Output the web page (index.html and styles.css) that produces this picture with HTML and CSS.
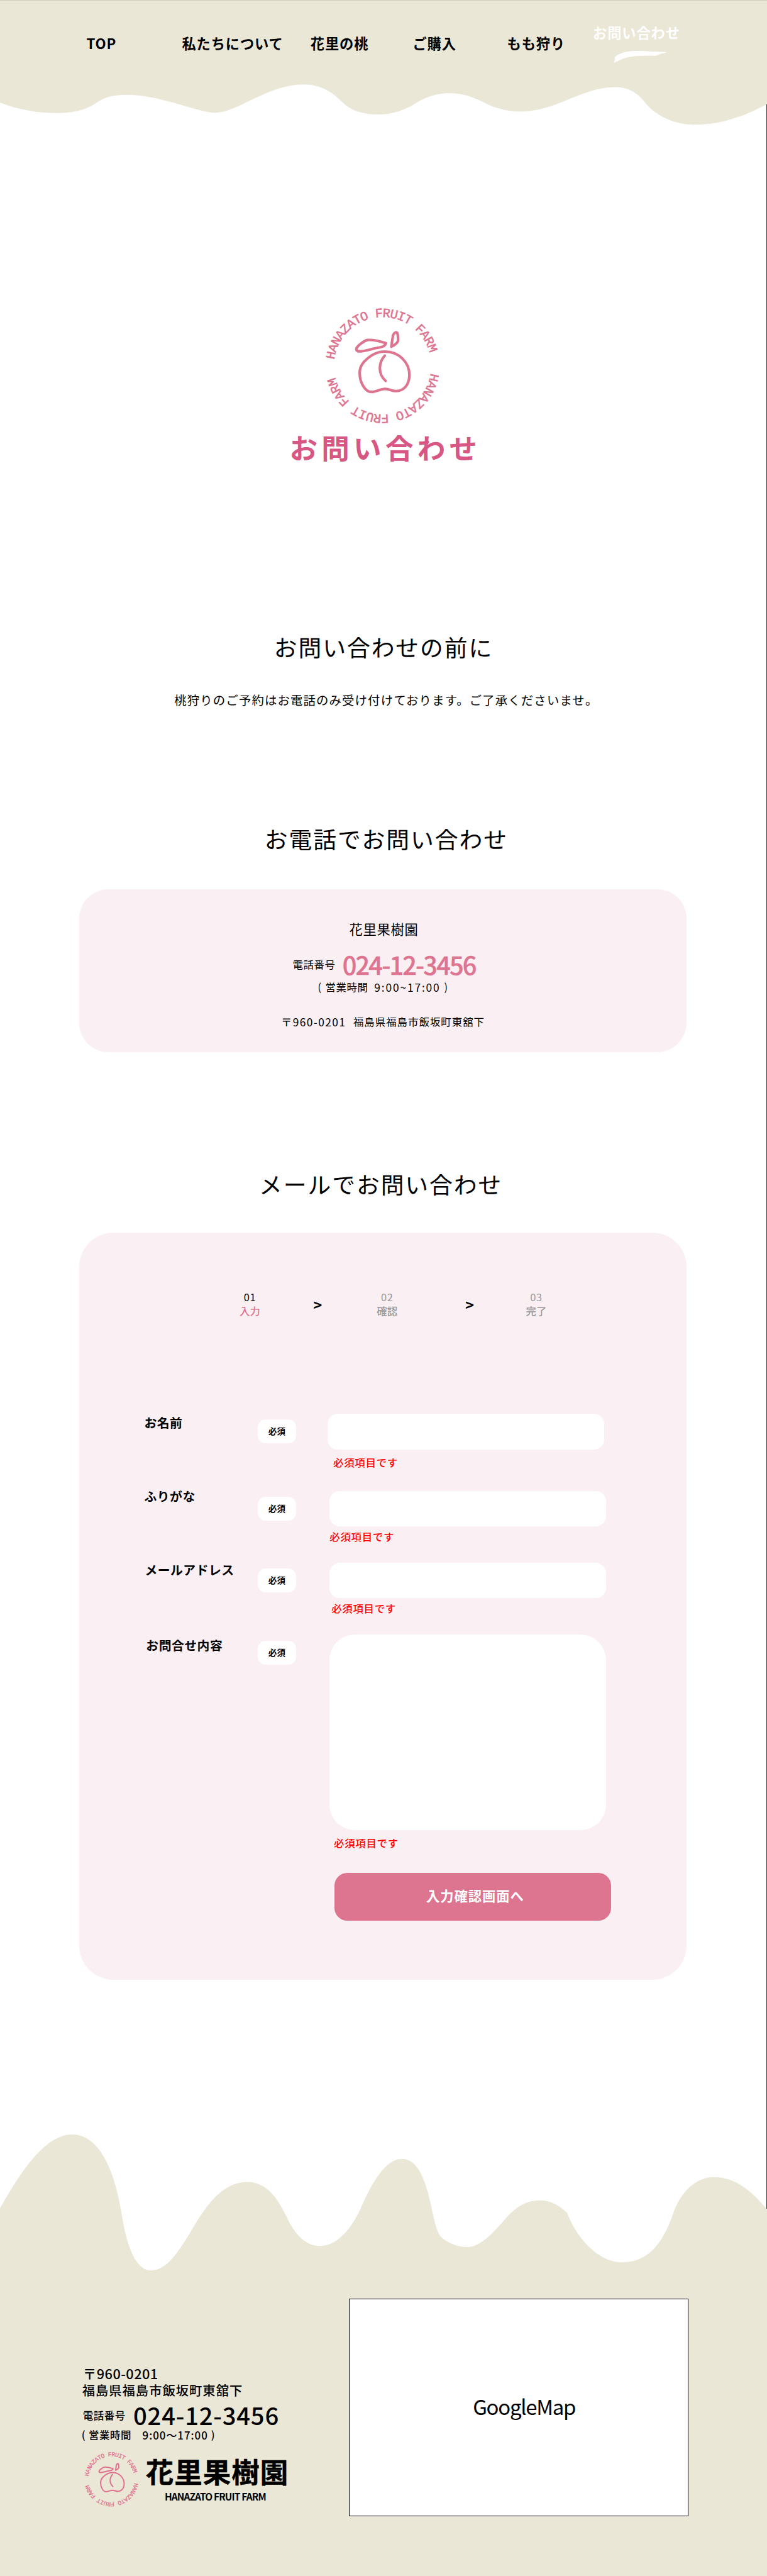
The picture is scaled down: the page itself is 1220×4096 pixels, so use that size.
FILE: index.html
```html
<!DOCTYPE html>
<html lang="ja">
<head>
<meta charset="utf-8">
<title>お問い合わせ | 花里果樹園</title>
<link rel="stylesheet" href="styles.css">
</head>
<body>
<svg class="defs" aria-hidden="true">
  <defs>
    <path id="ring" d="M505 601A240 240 0 0 1 505 121A240 240 0 0 1 505 601"/>
    <symbol id="peach" viewBox="215 71 580 580">
      <g fill="none" stroke="currentColor" stroke-width="13" stroke-linecap="round" stroke-linejoin="round">
        <path d="M515 291C585 290 638 345 637 408C636 460 605 486 570 486C545 486 540 475 518 475C495 475 470 490 450 490C420 490 392 445 392 398C391 370 402 355 412 343C438 315 475 291 515 291Z"/>
        <path d="M430 234C460 232 495 241 522 250C516 265 505 269 490 271C450 276 420 292 385 290C365 283 380 265 398 252C410 243 422 236 430 234Z"/>
        <path d="M548 267L556 212C562 196 576 190 579 205C581 220 583 236 580 242C572 254 560 262 548 267Z"/>
        <path d="M516 311C485 345 480 400 520 436"/>
      </g>
      <g class="ring-text">
        <text transform="rotate(-4.3 505 361)"><textPath href="#ring" startOffset="50%">HANAZATO FRUIT FARM</textPath></text>
        <text transform="rotate(177.2 505 361)"><textPath href="#ring" startOffset="50%">HANAZATO FRUIT FARM</textPath></text>
      </g>
    </symbol>
  </defs>
</svg>

<div class="page">
  <header class="header">
    <svg class="header-wave" viewBox="0 0 1260 204" preserveAspectRatio="none">
      <path d="M0 0V167.7C30 179 60 184.7 92.4 184.7C125 184.7 145 177 158 168C172 158 188 154.7 207 154.7C265 154.7 325 184 354 184C390 184 440 137.7 498 137.7C533 137.7 550 155 562.5 166.7C575 180 597 187 621 187C646 187 660 180 675 173.5C692 162 711 152 738.5 152C765 152 782 161 795.5 167.5C812 176 831 182 855 182C915 182 955 142 1011 142C1038 142 1052 158 1059 166.7C1078 190 1108 203.7 1143 203.7C1190 203.7 1230 186 1260 170V0Z"/>
    </svg>
    <nav class="nav">
      <a>TOP</a>
      <a>私たちについて</a>
      <a>花里の桃</a>
      <a>ご購入</a>
      <a>もも狩り</a>
      <a class="current">お問い合わせ
        <svg class="swoosh" viewBox="0 0 86 20"><path d="M0 19L3 13.500C1 13 1 11 4 8.500C14 1 26 0 40 0C55 0 70 2 86 1.500C86 3 84 4 80 4C76 5 72 8 68 8C50 7 30 8.500 19 11.500C12 13.500 6 18 0 19Z"/></svg>
      </a>
    </nav>
  </header>

  <main class="main">
    <svg class="logo"><use href="#peach"/></svg>
    <h1 class="title">お問い合わせ</h1>

    <h2 class="heading">お問い合わせの前に</h2>
    <p class="lead">桃狩りのご予約はお電話のみ受け付けております。ご了承くださいませ。</p>

    <h2 class="heading heading-phone">お電話でお問い合わせ</h2>
    <section class="card phone-card">
      <div class="farm">花里果樹園</div>
      <div class="tel"><span class="tel-label">電話番号</span><span class="tel-number">024-12-3456</span></div>
      <div class="hours"><span>(</span><span>営業時間</span><span class="time">9:00~17:00</span><span>)</span></div>
      <div class="address"><span class="card-zip">〒960-0201</span><span>福島県福島市飯坂町東舘下</span></div>
    </section>

    <h2 class="heading heading-mail">メールでお問い合わせ</h2>
    <section class="card mail-card">
      <div class="steps">
        <div class="step active"><span class="num">01</span><span class="name">入力</span></div>
        <div class="arrow">&gt;</div>
        <div class="step second"><span class="num">02</span><span class="name">確認</span></div>
        <div class="arrow last">&gt;</div>
        <div class="step third"><span class="num">03</span><span class="name">完了</span></div>
      </div>
      <form class="form">
        <div class="row row-name">
          <span class="label">お名前</span><span class="badge">必須</span>
          <div class="field"><div class="input"></div><p class="error">必須項目です</p></div>
        </div>
        <div class="row row-kana">
          <span class="label">ふりがな</span><span class="badge">必須</span>
          <div class="field"><div class="input"></div><p class="error">必須項目です</p></div>
        </div>
        <div class="row row-mail">
          <span class="label">メールアドレス</span><span class="badge">必須</span>
          <div class="field"><div class="input"></div><p class="error">必須項目です</p></div>
        </div>
        <div class="row row-body">
          <span class="label">お問合せ内容</span><span class="badge">必須</span>
          <div class="field"><div class="input area"></div><p class="error">必須項目です</p></div>
        </div>
        <div class="submit">入力確認画面へ</div>
      </form>
    </section>
  </main>

  <footer class="footer">
    <svg class="footer-wave" viewBox="0 0 1260 761" preserveAspectRatio="none">
      <path d="M0 156C40 85 78 35 118 35C162 35 187 90 199 160C207 215 222 258 248 258C276 258 296 222 313 195C335 158 362 113 406 113C440 113 457 143 470 168C483 198 502 218 525 218C556 218 580 185 593 155C612 112 634 75 660.500 75C690 75 702 120 711 165C717 192 721 203 731 208C740 215 758 220 768 219.700C792 219.700 815 190 835 168C850 152 866 143 887 143C910 143 925 157 932 164C945 200 980 244.700 1022 244.700C1070 244.700 1092 205 1106.500 163C1118 130 1143 105 1173 105C1212 105 1240 134 1260 158V761H0Z"/>
    </svg>
    <div class="info">
      <div class="zip">〒960-0201</div>
      <div class="place">福島県福島市飯坂町東舘下</div>
      <div class="foot-tel"><span class="tel-label">電話番号</span><span class="foot-number">024-12-3456</span></div>
      <div class="foot-hours"><span>(</span><span>営業時間</span><span class="time">9:00〜17:00</span><span>)</span></div>
      <div class="brand">
        <svg class="brand-logo"><use href="#peach"/></svg>
        <div class="brand-text"><div class="brand-name">花里果樹園</div><div class="brand-en">HANAZATO FRUIT FARM</div></div>
      </div>
    </div>
    <div class="map">GoogleMap</div>
  </footer>
  <div class="edge"></div>
</div>
</body>
</html>
```

FILE: styles.css
```css
/* 1rem = 10 design pixels */
html { font-size: 9.6825px; }
* { box-sizing: border-box; }
body { margin: 0; background: #fff; color: #000; font-family: "Noto Sans CJK JP", sans-serif; }
h1, h2, p { margin: 0; font-weight: 400; }
svg { display: block; }
.defs { position: absolute; width: 0; height: 0; }
.page { position: relative; width: 1220px; height: 4096px; overflow: hidden; }
.edge { position: absolute; right: 0; top: 17.1rem; height: 345.6rem; width: 1px; background: #3a3a3a; }

/* header */
.header { position: relative; height: 20.4rem; border-top: 1px solid #d0ccbd; }
.header-wave { position: absolute; left: 0; top: 0; width: 100%; height: 20.4rem; fill: #eae7d6; }
.nav { position: relative; display: grid; grid-template-columns: 15.7rem 21.1rem 16.8rem 15.5rem 14.1rem 16rem; padding: 5.5rem 0 0 14.2rem; font-size: 2.3rem; letter-spacing: .09rem; font-weight: 700; line-height: 3rem; white-space: nowrap; }
.current { color: #fff; margin-top: -1.8rem; }
.swoosh { width: 8.6rem; height: 2rem; margin: 1.6rem 0 0 3.4rem; fill: #fff; }

/* hero */
.main { display: flex; flex-direction: column; align-items: center; white-space: nowrap; }
.logo { width: 19.33rem; height: 19.33rem; margin: 29.96rem .3rem 0 0; color: #dd7490; }
.ring-text { font-family: "Liberation Mono", monospace; font-size: 63px; letter-spacing: -3.2px; fill: currentColor; stroke: currentColor; stroke-width: 1.8px; text-anchor: middle; }
.title { margin: .7rem 0 .2rem .6rem; color: #d75683; font-size: 4.6rem; font-weight: 700; letter-spacing: .65rem; line-height: 6rem; }
.heading { position: relative; margin-top: 26.6rem; margin-bottom: .2rem; font-size: 3.8rem; letter-spacing: .2rem; line-height: 6rem; }
.lead { margin: 4.1rem 0 .1rem .9rem; font-size: 2rem; letter-spacing: .12rem; line-height: 3rem; }
.heading-phone { margin: 18.1rem 0 .2rem .9rem; }
.heading-mail { margin: 18.62rem .9rem .2rem 0; }

/* cards */
.card { width: 99.8rem; margin-right: .2rem; background: #faeff3; }
.phone-card { height: 26.75rem; margin-top: 5.17rem; padding-top: 4.97rem; border-radius: 4.8rem; display: flex; flex-direction: column; align-items: center; }
.farm { font-size: 2.2rem; letter-spacing: .07rem; line-height: 3rem; margin-left: .3rem; }
.tel { display: flex; align-items: center; margin: 2.13rem 0 0 .4rem; line-height: 4.4rem; }
.tel-label { font-size: 1.7rem; letter-spacing: .06rem; width: 8.2rem; }
.tel-number { color: #dd7490; font-size: 4.1rem; font-weight: 500; letter-spacing: -.19rem; -webkit-text-stroke: .04rem #dd7490; }
.hours { display: flex; margin-top: .32rem; font-size: 1.7rem; letter-spacing: .06rem; line-height: 2.4rem; gap: .6rem; }
.hours .time { margin-left: .4rem; font-size: 1.8rem; letter-spacing: .19rem; }
.address { display: flex; gap: 1.2rem; margin-top: 3.35rem; font-size: 1.7rem; letter-spacing: .1rem; line-height: 2.4rem; }
.card-zip { font-size: 1.8rem; letter-spacing: .14rem; }

.mail-card { height: 122.69rem; margin-top: 4.85rem; padding-top: 9.47rem; border-radius: 5.6rem; }
.steps { display: flex; height: 4.6rem; padding-left: 25.05rem; }
.step { width: 6rem; display: flex; flex-direction: column; align-items: center; gap: .1rem; line-height: 2.2rem; color: #999; font-size: 1.7rem; }
.num { font-size: 1.7rem; letter-spacing: .06rem; }
.name { font-weight: 500; }
.active .num { color: #000; }
.active .name { color: #dd7490; }
.arrow { width: 3rem; margin-left: 6.65rem; text-align: center; font-size: 2.4rem; font-weight: 700; line-height: 4.6rem; }
.second { margin-left: 6.9rem; }
.arrow.last { margin-left: 9.06rem; }
.third { margin-left: 6.44rem; }

.form { padding: 15.64rem 0 0 10.7rem; }
.row { display: grid; grid-template-columns: 18.67rem 11.48rem 45.45rem; align-items: start; }
.row-name { height: 12.66rem; }
.row-kana { height: 11.79rem; }
.row-mail { height: 11.85rem; }
.row-body { height: 39.05rem; }
.label { margin-top: -.1rem; font-size: 2.05rem; font-weight: 700; letter-spacing: .05rem; line-height: 3rem; }
.row-kana .label { margin-top: -.66rem; }
.row-mail .label { margin: -.38rem 0 0 .1rem; }
.row-body .label { margin: .2rem 0 0 .3rem; }
.badge { width: 6.23rem; height: 3.92rem; margin-top: .98rem; border-radius: 1.3rem; background: #fff; text-align: center; font-size: 1.4rem; font-weight: 700; line-height: 3.8rem; }
.input { height: 5.84rem; border-radius: 1.7rem; background: #fff; }
.area { height: 32.1rem; border-radius: 4.2rem; }
.field { margin-left: .3rem; width: 45.4rem; }
.row-name .field { margin-left: 0; }
.error { color: #f00; font-size: 1.7rem; font-weight: 500; letter-spacing: .07rem; line-height: 2.4rem; padding-left: .6rem; }
.row-name .error { margin: 1.02rem 0 0 .3rem; }
.row-kana .error { margin: .48rem 0 0 -.6rem; }
.row-mail .error { margin: .5rem 0 0 -.3rem; }
.row-body .error { margin: .86rem 0 0 .1rem; }
.submit { width: 45.45rem; height: 7.85rem; margin-left: 31.2rem; padding-left: .9rem; border-radius: 2.1rem; background: #dd7490; color: #fff; text-align: center; font-size: 2.2rem; letter-spacing: .1rem; font-weight: 700; line-height: 7.4rem; }

/* footer */
.footer { position: relative; height: 76.1rem; margin-top: 21.82rem; display: flex; padding-left: 13.4rem; white-space: nowrap; font-weight: 500; }
.footer-wave { position: absolute; left: 0; top: 0; width: 100%; height: 76.2rem; fill: #eae7d6; }
.info { position: relative; width: 43.9rem; padding-top: 41.37rem; }
.zip { font-size: 2.25rem; letter-spacing: .04rem; line-height: 2.8rem; margin-left: .2rem; }
.place { font-size: 2.1rem; letter-spacing: .1rem; line-height: 2.8rem; margin-left: .1rem; }
.foot-tel { display: flex; align-items: center; margin: .88rem 0 0 .2rem; line-height: 3.6rem; }
.foot-number { font-size: 3.95rem; letter-spacing: .08rem; margin-left: .1rem; }
.foot-hours { display: flex; gap: .5rem; margin-top: .25rem; font-size: 1.7rem; letter-spacing: .06rem; line-height: 2.4rem; }
.foot-hours .time { margin-left: 1.3rem; font-size: 1.75rem; letter-spacing: .1rem; }
.brand { display: flex; align-items: flex-start; margin: 1.5rem 0 0 .3rem; }
.brand-logo { width: 9.15rem; height: 9.15rem; color: #e0708f; }
.brand-text { margin: .5rem 0 0 1.1rem; }
.brand-name { font-size: 4.6rem; font-weight: 700; letter-spacing: .1rem; line-height: 5.4rem; -webkit-text-stroke: .05rem #000; }
.brand-en { margin: .5rem 0 0 3.1rem; font-size: 1.6rem; font-weight: 700; letter-spacing: -.09rem; line-height: 2rem; }
.map { position: relative; width: 55.8rem; height: 35.8rem; margin-top: 30.5rem; border: 1px solid #000; background: #fff; text-align: center; font-size: 3.4rem; font-weight: 400; letter-spacing: -.13rem; line-height: 35.2rem; padding-left: 1.8rem; }
```
